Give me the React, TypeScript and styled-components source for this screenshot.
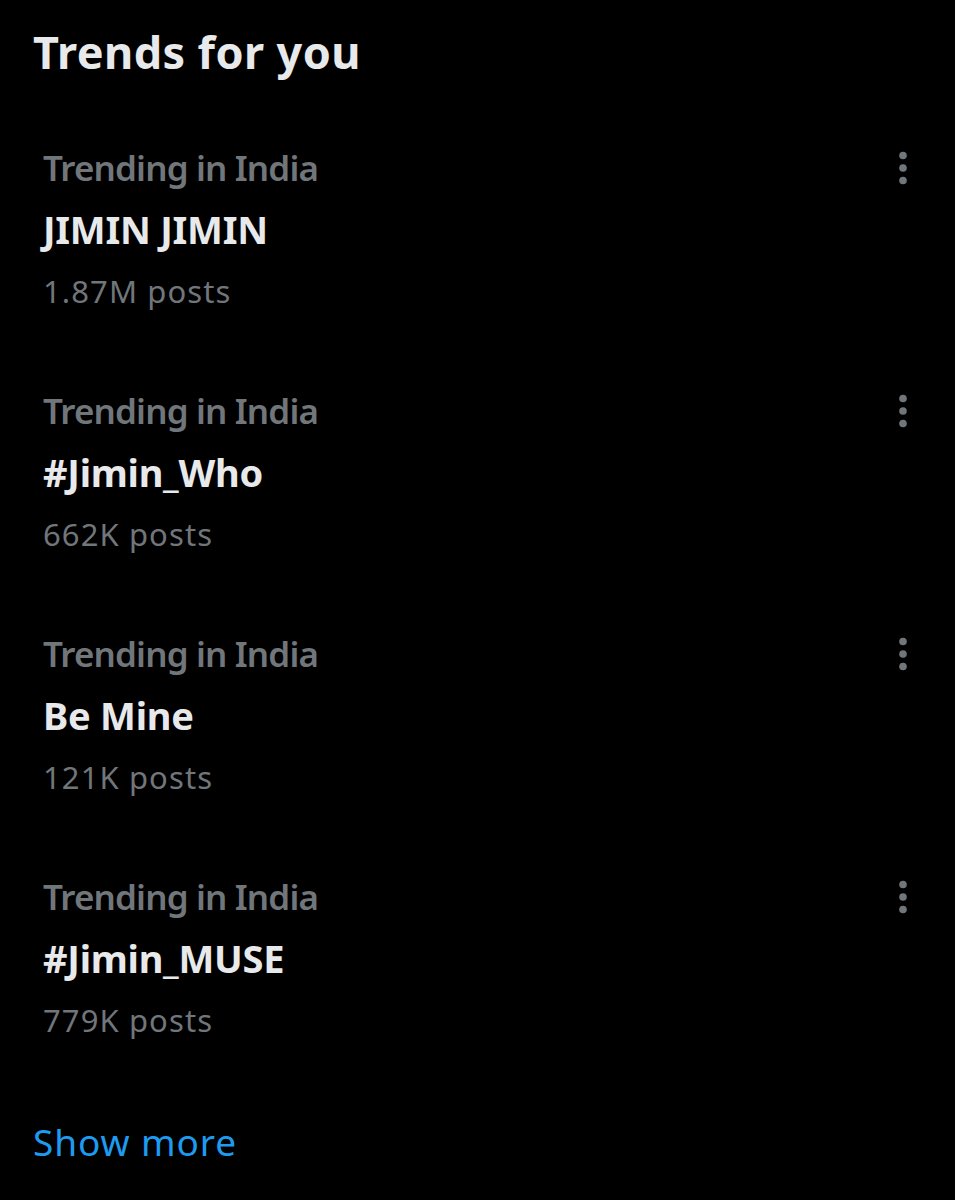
import styled, { createGlobalStyle } from 'styled-components';

const GlobalStyle = createGlobalStyle`
  body {
    margin: 0;
    background: #000;
    font-family: 'Noto Sans', 'Open Sans', sans-serif;
  }
`;

const Page = styled.div`
  width: 955px;
  height: 1200px;
  background: #000;
  box-sizing: border-box;
  padding: 22px 0 0 33px;
  overflow: hidden;
`;

const Title = styled.h2`
  margin: 0 0 62px;
  font-size: 45px;
  line-height: 60px;
  font-weight: 700;
  letter-spacing: 0.4px;
  color: #e7e9ea;
`;

const List = styled.div`
  display: flex;
  flex-direction: column;
  gap: 76px;
  padding-left: 10px;
`;

const TrendRow = styled.div`
  display: flex;
  align-items: flex-start;
  justify-content: space-between;
  padding-right: 45px;
`;

const TrendBody = styled.div`
  display: flex;
  flex-direction: column;
`;

const Context = styled.div`
  font-size: 35px;
  line-height: 48px;
  font-weight: 600;
  letter-spacing: -0.85px;
  color: #71767b;
`;

const Name = styled.div`
  margin-top: 11px;
  font-size: 38px;
  line-height: 52px;
  font-weight: 700;
  letter-spacing: -0.25px;
  color: #e7e9ea;
`;

const Count = styled.div`
  margin-top: 16px;
  font-size: 31px;
  line-height: 40px;
  letter-spacing: 1.1px;
  color: #71767b;
`;

const MoreButton = styled.button`
  width: 14px;
  height: 48px;
  padding: 0;
  border: 0;
  background: none;
  display: flex;
  align-items: center;
  justify-content: center;

  svg {
    display: block;
  }
`;

const ShowMore = styled.div`
  margin-top: 77px;
  font-size: 37px;
  line-height: 50px;
  letter-spacing: 0.9px;
  color: #1d9bf0;
`;

const trends = [
  { name: 'JIMIN JIMIN', posts: '1.87M posts' },
  { name: '#Jimin_Who', posts: '662K posts' },
  { name: 'Be Mine', posts: '121K posts' },
  { name: '#Jimin_MUSE', posts: '779K posts' },
];

function DotsIcon() {
  return (
    <svg width='10' height='34' viewBox='0 0 10 34'>
      <circle cx='5' cy='4.5' r='3.8' fill='#71767b' />
      <circle cx='5' cy='17' r='3.8' fill='#71767b' />
      <circle cx='5' cy='29.5' r='3.8' fill='#71767b' />
    </svg>
  );
}

function App() {
  return (
    <Page>
      <GlobalStyle />
      <Title>Trends for you</Title>
      <List>
        {trends.map(({ name, posts }) => (
          <TrendRow key={name}>
            <TrendBody>
              <Context>Trending in India</Context>
              <Name>{name}</Name>
              <Count>{posts}</Count>
            </TrendBody>
            <MoreButton>
              <DotsIcon />
            </MoreButton>
          </TrendRow>
        ))}
      </List>
      <ShowMore>Show more</ShowMore>
    </Page>
  );
}

export default App;
